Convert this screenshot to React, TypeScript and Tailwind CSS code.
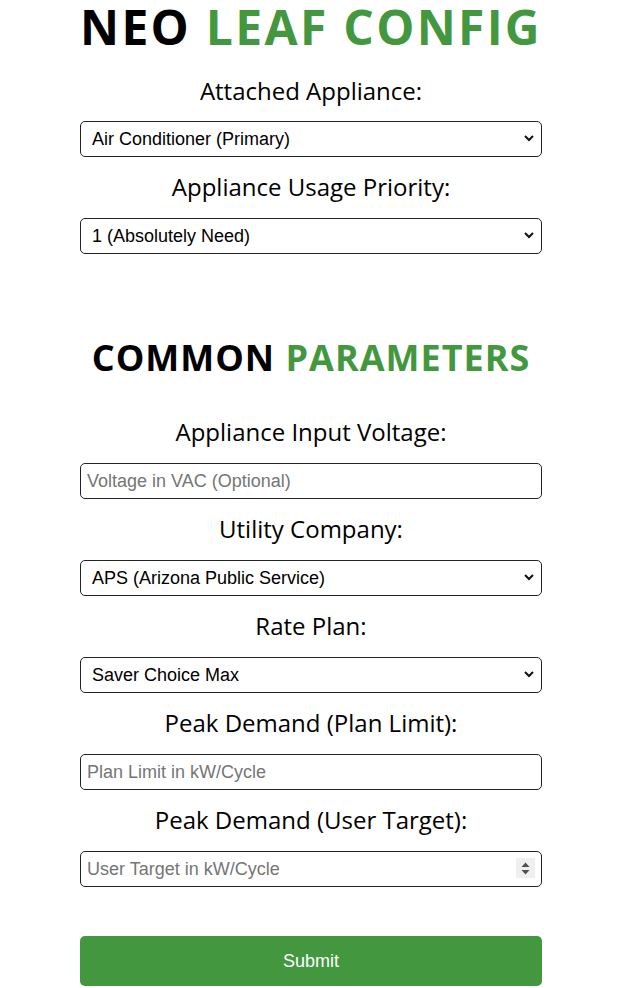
import React from "react";

const label = "block text-center text-[24px] leading-[36px] text-black mt-[12px] mb-[13px]";
const field =
  "block w-full h-[36px] rounded-[5px] border border-[#222] bg-white text-[18px] text-black";
const fieldFont = { fontFamily: '"Liberation Sans", Arial, sans-serif' };

function Chevron() {
  return (
    <svg
      className="pointer-events-none absolute right-[8px] top-[13px]"
      width="10"
      height="8"
      viewBox="0 0 10 8"
    >
      <path d="M1 2 L5 6 L9 2" fill="none" stroke="#111" strokeWidth="2" />
    </svg>
  );
}

function Select({ options }: { options: string[] }) {
  return (
    <div className="relative">
      <select
        className={field + " appearance-none pl-[11px] pr-[24px]"}
        style={fieldFont}
        defaultValue={options[0]}
      >
        {options.map((o) => (
          <option key={o} value={o}>
            {o}
          </option>
        ))}
      </select>
      <Chevron />
    </div>
  );
}

function Spinner() {
  return (
    <div className="pointer-events-none absolute right-[7px] top-[7px] w-[19px] h-[20px] bg-[#efefef] flex items-center justify-center">
      <svg width="9" height="13" viewBox="0 0 9 13">
        <path d="M4.5 0.5 L8.5 5 L0.5 5 Z" fill="#505050" />
        <path d="M0.5 8 L8.5 8 L4.5 12.5 Z" fill="#505050" />
      </svg>
    </div>
  );
}

export default function App() {
  return (
    <div
      className="min-h-[988px] bg-white pl-[5px]"
      style={{ fontFamily: '"Open Sans", sans-serif' }}
    >
      <div className="mx-auto w-[462px]">
        <h1 className="-mx-[20px] whitespace-nowrap text-center text-[48px] leading-[53px] font-bold text-black tracking-[2.3px]">
          NEO <span className="text-[#43983f]">LEAF CONFIG</span>
        </h1>

        <label className={label + " !mt-[20px] !mb-[12px]"}>Attached Appliance:</label>
        <Select options={["Air Conditioner (Primary)", "Water Heater", "Pool Pump"]} />

        <label className={label}>Appliance Usage Priority:</label>
        <Select options={["1 (Absolutely Need)", "2 (Need)", "3 (Nice to Have)"]} />

        <h2 className="mt-[84px] text-center text-[36px] leading-[40px] font-bold text-black tracking-[1px]">
          COMMON <span className="text-[#43983f]">PARAMETERS</span>
        </h2>

        <label className={label + " !mt-[36px]"}>Appliance Input Voltage:</label>
        <input
          type="text"
          placeholder="Voltage in VAC (Optional)"
          className={field + " px-[6px] placeholder:text-[#757575]"}
          style={fieldFont}
        />

        <label className={label}>Utility Company:</label>
        <Select options={["APS (Arizona Public Service)", "SRP (Salt River Project)", "TEP (Tucson Electric Power)"]} />

        <label className={label}>Rate Plan:</label>
        <Select options={["Saver Choice Max", "Saver Choice", "Saver Choice Plus"]} />

        <label className={label}>Peak Demand (Plan Limit):</label>
        <input
          type="text"
          placeholder="Plan Limit in kW/Cycle"
          className={field + " px-[6px] placeholder:text-[#757575]"}
          style={fieldFont}
        />

        <label className={label}>Peak Demand (User Target):</label>
        <div className="relative">
          <input
            type="text"
            inputMode="numeric"
            placeholder="User Target in kW/Cycle"
            className={field + " px-[6px] pr-[32px] placeholder:text-[#757575]"}
            style={fieldFont}
          />
          <Spinner />
        </div>

        <button
          type="button"
          className="mt-[49px] block w-full h-[50px] rounded-[5px] bg-[#43983f] text-white text-[18px]"
          style={fieldFont}
        >
          Submit
        </button>
      </div>
    </div>
  );
}
